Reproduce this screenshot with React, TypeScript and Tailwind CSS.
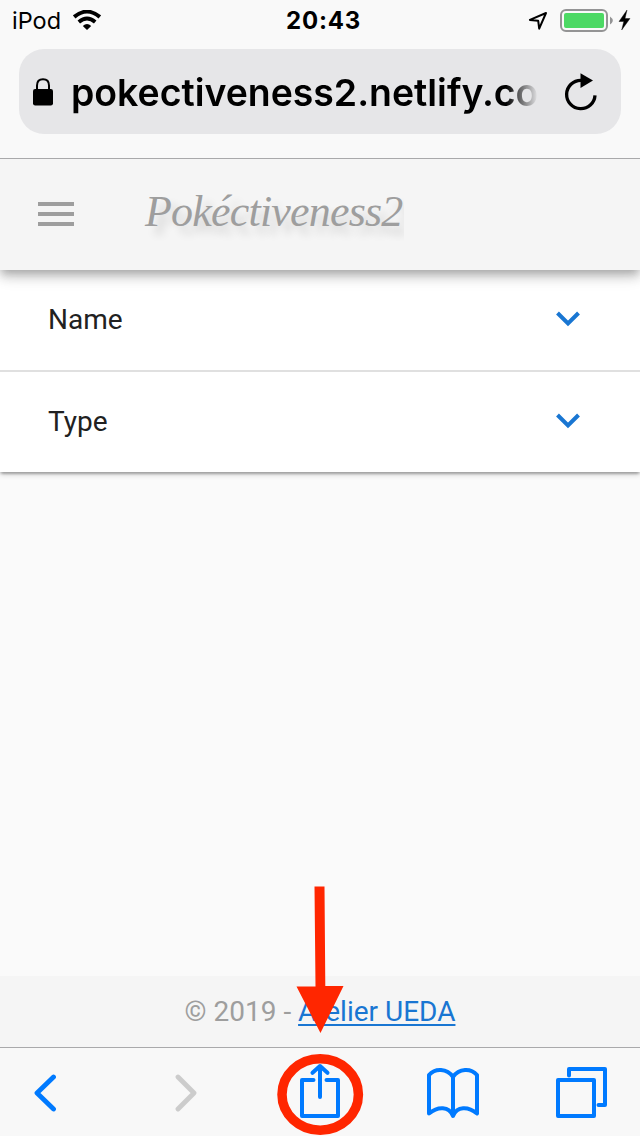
function StatusBar() {
  return (
    <div className="grid h-[49px] grid-cols-3 pb-2 text-black">
      <div className="flex h-10 items-center pl-3">
        <span className="w-[49px] pt-[2px] text-[23.5px] leading-none">iPod</span>
        <svg className="ml-3" width="28" height="20" viewBox="0 0 28 20">
          <g fill="none" stroke="#000" strokeWidth="3.9">
            <path d="M1.2 6.9Q14 -3.7 26.8 6.9" />
            <path d="M5.8 12Q14 5.2 22.2 12" />
          </g>
          <path d="M9.800 15.900Q14 12.200 18.200 15.900L14 20z" />
        </svg>
      </div>
      <div className="flex h-[41px] items-center justify-center pl-[8px]">
        <span className="w-[76px] whitespace-nowrap pt-px text-[24px] font-bold leading-none tracking-[0.8px]">20:43</span>
      </div>
      <div className="flex h-10 items-center justify-end pr-[9px]">
        <svg width="104" height="26" viewBox="0 0 104 26">
          <path d="M2.900 12.900L19 6L12.200 21.600L11.200 13.800z" fill="none" stroke="#000" strokeWidth="2" strokeLinejoin="round" />
          <rect x="34" y="3" width="46" height="21" rx="5" fill="none" stroke="#949495" strokeWidth="2" />
          <rect x="37" y="6" width="40" height="15" rx="2" fill="#4cd964" />
          <path d="M83 9.500Q88.500 13.500 83 17.500z" fill="#949495" />
          <path d="M100 3L92 14.500H96.800L94.700 23L103 11.500H98z" stroke="#000" strokeWidth="0.4" />
        </svg>
      </div>
    </div>
  );
}

function AddressBar() {
  return (
    <div className="mx-[19px] flex h-[85px] items-center rounded-[25px] bg-[#e6e6e8] pl-[14px]">
      <svg width="20" height="28" viewBox="0 0 20 28" className="shrink-0">
        <path d="M4 12V7.500Q4 1.200 10 1.200T16 7.500V12" fill="none" stroke="#000" strokeWidth="2" />
        <rect y="11" width="20" height="16.500" rx="2.200" />
      </svg>
      <div className="ml-[18px] w-[467px] whitespace-nowrap pt-[3px] text-[37.4px] font-semibold leading-[60px] text-black [mask-image:linear-gradient(to_right,black_435px,transparent_467px)]">
        pokectiveness2.netlify.co
      </div>
      <svg className="ml-[26px] shrink-0" width="34" height="40" viewBox="0 0 34 40">
        <path d="M17 8.300A14.200 14.200 0 1 0 31 23.300" fill="none" stroke="#000" strokeWidth="3.300" />
        <path d="M16.500 1.200V16L29 8.500z" />
      </svg>
    </div>
  );
}

function AppHeader() {
  return (
    <header className="relative z-10 flex h-[111px] items-center bg-[#f5f5f5] pl-[38px] shadow-[0_4px_8px_-2px_rgba(0,0,0,0.2),0_8px_10px_0_rgba(0,0,0,0.14),0_2px_20px_0_rgba(0,0,0,0.12)]">
      <div className="mb-[1px] flex flex-col gap-[6px]">
        <div className="h-1 w-9 bg-[#9e9e9e]" />
        <div className="h-1 w-9 bg-[#9e9e9e]" />
        <div className="h-1 w-9 bg-[#9e9e9e]" />
      </div>
      <h1 className="mb-[6px] ml-[71px] w-[259px] whitespace-nowrap font-['Liberation_Serif',serif] text-[44px] italic leading-[60px] tracking-[-0.8px] text-[#9e9e9e] [clip-path:inset(0_0_0_-10px)] [text-shadow:8px_8px_8px_rgba(0,0,0,0.14)]">
        Pokéctiveness2
      </h1>
    </header>
  );
}

function PanelRow({ label }: { label: string }) {
  return (
    <div className="flex items-center justify-between pl-12 pr-[60px]">
      <span className="font-[Roboto,sans-serif] text-[28px] leading-[100px] text-[#212121]">{label}</span>
      <svg className="mb-[3px]" width="24" height="16" viewBox="0 0 24 16">
        <path d="M1.500 2L12 12.500L22.500 2" fill="none" stroke="#1976d2" strokeWidth="4" />
      </svg>
    </div>
  );
}

function Toolbar() {
  return (
    <nav className="flex h-[89px] items-start border-t border-[#a9a9ab] bg-[#f8f8f8] pl-[34px] pt-[18px]">
      <svg width="22" height="54" viewBox="0 0 22 54">
        <path d="M19.500 11L3 27L19.500 43" fill="none" stroke="#007aff" strokeWidth="4.800" strokeLinecap="round" strokeLinejoin="round" />
      </svg>
      <svg className="ml-[119px]" width="22" height="54" viewBox="0 0 22 54">
        <path d="M3 11L19 27L3 43" fill="none" stroke="#cccccc" strokeWidth="4.800" strokeLinecap="round" strokeLinejoin="round" />
      </svg>
      <svg className="ml-[102px] overflow-visible" width="42" height="54" viewBox="0 0 42 54" fill="none" stroke="#007aff" strokeWidth="4" strokeLinecap="round" strokeLinejoin="round">
        <path d="M14.500 14H3V50H39V14H27.500" />
        <path d="M21 31V0M13.500 6.800L21 0L28.500 6.800" />
      </svg>
      <svg className="ml-[86px]" width="52" height="54" viewBox="0 0 52 54" fill="none" stroke="#007aff" strokeWidth="4" strokeLinecap="round" strokeLinejoin="round">
        <path d="M26 11C20 2 8 2 2 9V47.500C11 40 22 40 26 50C30 40 41 40 50 47.500V9C44 2 32 2 26 11V50" />
      </svg>
      <svg className="ml-[77px]" width="52" height="54" viewBox="0 0 52 54" fill="none" stroke="#007aff" strokeWidth="4" strokeLinecap="round" strokeLinejoin="round">
        <rect x="2" y="14" width="36" height="36" />
        <path d="M13 9.500V3H49V39H42.500" />
      </svg>
    </nav>
  );
}

export default function App() {
  return (
    <div className="relative flex h-[1136px] w-[640px] flex-col overflow-hidden bg-[#fafafa] font-[Inter,sans-serif]">
      <div className="relative z-20 h-[159px] shrink-0 border-b border-[#a9a9ab] bg-[#f9f9f9]">
        <StatusBar />
        <AddressBar />
      </div>
      <AppHeader />
      <main className="flex-1">
        <div className="divide-y-2 divide-[#e0e0e0] bg-white shadow-[0_2px_6px_0_rgba(0,0,0,0.2),0_2px_2px_0_rgba(0,0,0,0.14),0_4px_2px_-2px_rgba(0,0,0,0.12)]">
          <PanelRow label="Name" />
          <PanelRow label="Type" />
        </div>
      </main>
      <footer className="h-[71px] bg-[#f5f5f5] text-center font-[Roboto,sans-serif] text-[28px] leading-[71px] text-[#9e9e9e]">
        © 2019 - <a className="text-[#1976d2] underline decoration-2 underline-offset-[3px]">Atelier UEDA</a>
      </footer>
      <Toolbar />
      <svg className="absolute left-[276px] top-[880px]" width="90" height="256" viewBox="0 0 90 256">
        <path d="M38.500 6.500H48.500L49.300 106H67.500L44.500 153L20.500 106.500H39.500z" fill="#ff2600" />
        <ellipse cx="44.200" cy="214.500" rx="38.200" ry="35.700" fill="none" stroke="#ff2600" strokeWidth="9.500" />
      </svg>
    </div>
  );
}
